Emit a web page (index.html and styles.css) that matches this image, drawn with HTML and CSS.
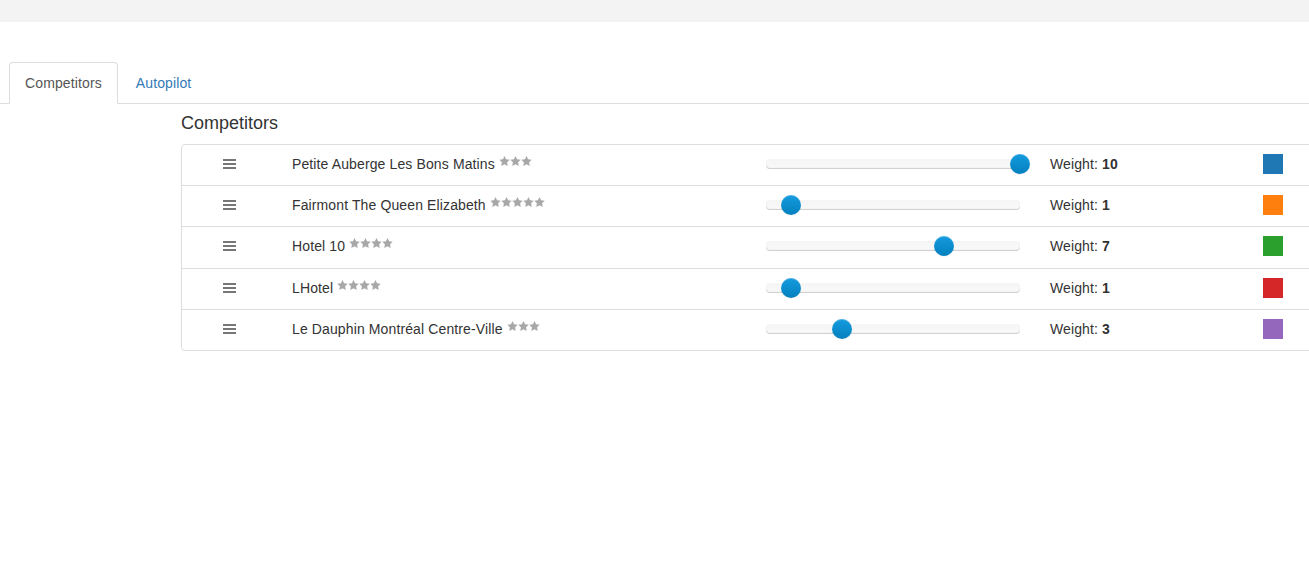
FILE: index.html
```html
<!DOCTYPE html>
<html lang="en">
<head>
    <meta charset="UTF-8">
    <meta name="viewport" content="width=device-width, initial-scale=1.0">
    <title>Competitors</title>
    <link rel="stylesheet" href="styles.css">
</head>
<body>
    <div class="topbar"></div>
    <ul class="nav-tabs">
        <li class="active"><a href="#">Competitors</a></li>
        <li><a href="#">Autopilot</a></li>
    </ul>
    <div class="content">
        <h4>Competitors</h4>
        <div class="panel">
            <div class="row">
                <div class="drag"><span></span><span></span><span></span></div>
                <div class="name">Petite Auberge Les Bons Matins <svg class="stars" width="33" height="10" viewBox="0 0 33 10"><use href="#star"/><use href="#star" x="11"/><use href="#star" x="22"/></svg></div>
                <div class="slider"><div class="track"></div><div class="handle" style="left: 100%"></div></div>
                <div class="weight">Weight: <b>10</b></div>
                <div class="swatch" style="background: #1f77b4"></div>
            </div>
            <div class="row">
                <div class="drag"><span></span><span></span><span></span></div>
                <div class="name">Fairmont The Queen Elizabeth <svg class="stars" width="55" height="10" viewBox="0 0 55 10"><use href="#star"/><use href="#star" x="11"/><use href="#star" x="22"/><use href="#star" x="33"/><use href="#star" x="44"/></svg></div>
                <div class="slider"><div class="track"></div><div class="handle" style="left: 10%"></div></div>
                <div class="weight">Weight: <b>1</b></div>
                <div class="swatch" style="background: #ff7f0e"></div>
            </div>
            <div class="row">
                <div class="drag"><span></span><span></span><span></span></div>
                <div class="name">Hotel 10 <svg class="stars" width="44" height="10" viewBox="0 0 44 10"><use href="#star"/><use href="#star" x="11"/><use href="#star" x="22"/><use href="#star" x="33"/></svg></div>
                <div class="slider"><div class="track"></div><div class="handle" style="left: 70%"></div></div>
                <div class="weight">Weight: <b>7</b></div>
                <div class="swatch" style="background: #2ca02c"></div>
            </div>
            <div class="row">
                <div class="drag"><span></span><span></span><span></span></div>
                <div class="name">LHotel <svg class="stars" width="44" height="10" viewBox="0 0 44 10"><use href="#star"/><use href="#star" x="11"/><use href="#star" x="22"/><use href="#star" x="33"/></svg></div>
                <div class="slider"><div class="track"></div><div class="handle" style="left: 10%"></div></div>
                <div class="weight">Weight: <b>1</b></div>
                <div class="swatch" style="background: #d62728"></div>
            </div>
            <div class="row">
                <div class="drag"><span></span><span></span><span></span></div>
                <div class="name">Le Dauphin Montréal Centre-Ville <svg class="stars" width="33" height="10" viewBox="0 0 33 10"><use href="#star"/><use href="#star" x="11"/><use href="#star" x="22"/></svg></div>
                <div class="slider"><div class="track"></div><div class="handle" style="left: 30%"></div></div>
                <div class="weight">Weight: <b>3</b></div>
                <div class="swatch" style="background: #9467bd"></div>
            </div>
        </div>
    </div>
    <svg width="0" height="0" style="position: absolute">
        <defs>
            <polygon id="star" points="5.5,0 7.1,3.3 10.7,3.8 8.1,6.3 8.7,10 5.5,8.2 2.3,10 2.9,6.3 0.3,3.8 3.9,3.3" fill="#a8a8a8"/>
        </defs>
    </svg>
</body>
</html>
```

FILE: styles.css
```css
html, body {
    overflow-x: hidden;
}
body {
    margin: 0;
    font-family: "Liberation Sans", Arial, sans-serif;
    font-size: 14px;
    line-height: 20px;
    letter-spacing: 0.12px;
    color: #333;
    background-color: #fff;
}
.topbar {
    height: 22px;
    background-color: #f3f3f3;
}
.nav-tabs {
    display: flex;
    list-style: none;
    margin: 40px 0 0;
    padding: 0 0 0 9px;
    border-bottom: 1px solid #ddd;
}
.nav-tabs li {
    margin-bottom: -1px;
    margin-right: 2px;
}
.nav-tabs a {
    display: block;
    padding: 10px 15px;
    border: 1px solid transparent;
    border-radius: 4px 4px 0 0;
    color: #337ab7;
    text-decoration: none;
}
.nav-tabs .active a {
    color: #555;
    background-color: #fff;
    border-color: #ddd #ddd transparent;
}
.content {
    padding-left: 181px;
}
h4 {
    margin: 10px 0 10px;
    font-size: 18px;
    font-weight: 500;
    line-height: 1.1;
    letter-spacing: 0;
}
.panel {
    width: 1140px;
    border: 1px solid #ddd;
    border-radius: 4px;
}
.row {
    display: grid;
    grid-template-columns: 95px 489px 254px 30px 213px 20px;
    align-items: center;
    height: 38.25px;
    padding-bottom: 2px;
    border-top: 1px solid #ddd;
}
.row:first-child {
    border-top: none;
}
.drag {
    display: flex;
    flex-direction: column;
    align-items: center;
    gap: 2px;
}
.drag span {
    display: block;
    width: 13px;
    height: 2px;
    background-color: #777;
}
.name {
    padding-left: 15px;
    white-space: nowrap;
}
.stars {
    vertical-align: 3px;
}
.slider {
    position: relative;
    height: 10px;
}
.track {
    height: 10px;
    border-radius: 4px;
    background: linear-gradient(#f5f5f5, #f9f9f9);
    box-shadow: inset 0 -1px 1px rgba(0, 0, 0, 0.18);
}
.handle {
    position: absolute;
    top: -5px;
    width: 20px;
    height: 20px;
    margin-left: -10px;
    border-radius: 50%;
    background: linear-gradient(#149bdf, #0480be);
    box-shadow: inset 0 1px 0 rgba(255, 255, 255, 0.2), 0 1px 2px rgba(0, 0, 0, 0.05);
}
.weight {
    grid-column: 5;
}
.swatch {
    width: 20px;
    height: 20px;
}
```
